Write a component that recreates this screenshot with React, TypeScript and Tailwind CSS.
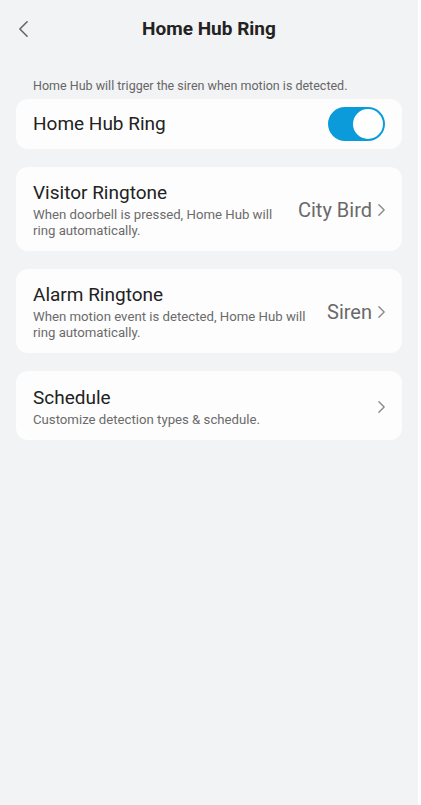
import React from "react";

function Chevron({ className }: { className?: string }) {
  return (
    <svg viewBox="0 0 10 16" className={className} fill="none" stroke="currentColor" strokeWidth="1.6" strokeLinecap="round" strokeLinejoin="round">
      <path d="M2 2l6 6-6 6" />
    </svg>
  );
}

function Row({ title, sub, value, h }: { title: string; sub: string; value?: string; h: string }) {
  return (
    <div className={`flex items-center rounded-[12px] bg-[#fdfdfd] pl-[17px] pr-[16px] pt-[2px] ${h}`}>
      <div className="flex-1 min-w-0">
        <div className="text-[19px] leading-[24px] text-[#222]">{title}</div>
        <div className="mt-[2px] text-[13.2px] leading-[16px] text-[#6b6b6b]">{sub}</div>
      </div>
      {value && <div className="ml-4 text-[20px] text-[#6a6a6a]">{value}</div>}
      <Chevron className="ml-[5px] h-[14px] w-[9px] text-[#8a8a8a]" />
    </div>
  );
}

export default function App() {
  return (
    <div className="flex h-[805px] w-[421px] bg-white" style={{ fontFamily: "Roboto, 'Noto Sans', sans-serif" }}>
      <div className="w-[418px] bg-[#f2f3f5] px-[16px]">
        <div className="relative flex h-[60px] items-center justify-center">
          <svg viewBox="0 0 12 20" className="absolute left-[2px] top-[20px] h-[18px] w-[11px] text-[#666]" fill="none" stroke="currentColor" strokeWidth="1.8" strokeLinecap="round" strokeLinejoin="round">
            <path d="M10 2L2 10l8 8" />
          </svg>
          <div className="-mt-[1px] text-[19px] font-bold text-[#222]">Home Hub Ring</div>
        </div>
        <div className="mt-[18px] pl-[17px] text-[12.5px] leading-[16px] text-[#666]">
          Home Hub will trigger the siren when motion is detected.
        </div>
        <div className="mt-[5px] flex h-[50px] items-center rounded-[12px] bg-[#fdfdfd] pl-[17px] pr-[17px]">
          <div className="flex-1 text-[19px] text-[#222]">Home Hub Ring</div>
          <div className="flex h-[34px] w-[57px] items-center justify-end rounded-full bg-[#0b9bdb] pr-[2px]">
            <div className="h-[30px] w-[30px] rounded-full bg-white" />
          </div>
        </div>
        <div className="mt-[18px] flex flex-col gap-[18px]">
          <Row h="h-[84px]" title="Visitor Ringtone" sub="When doorbell is pressed, Home Hub will ring automatically." value="City Bird" />
          <Row h="h-[84px]" title="Alarm Ringtone" sub="When motion event is detected, Home Hub will ring automatically." value="Siren" />
          <Row h="h-[69px]" title="Schedule" sub="Customize detection types & schedule." />
        </div>
      </div>
    </div>
  );
}
